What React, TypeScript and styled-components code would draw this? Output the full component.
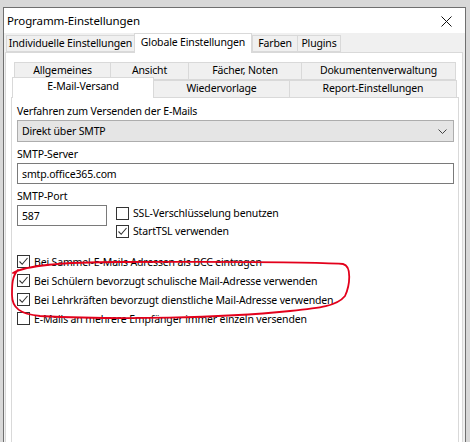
import styled, { createGlobalStyle } from "styled-components";

const GlobalStyle = createGlobalStyle`
    html, body {
        margin: 0;
        padding: 0;
        background: #d8d8d8;
    }
`;

interface TabDef {
    label: string;
    w: number;
    active?: boolean;
}

const outerTabs: TabDef[] = [
    { label: "Individuelle Einstellungen", w: 128 },
    { label: "Globale Einstellungen", w: 118, active: true },
    { label: "Farben", w: 45 },
    { label: "Plugins", w: 44 },
];

const innerBackRow: TabDef[] = [
    { label: "Allgemeines", w: 97 },
    { label: "Ansicht", w: 78 },
    { label: "Fächer, Noten", w: 113 },
    { label: "Dokumentenverwaltung", w: 154 },
];

const innerFrontRow: TabDef[] = [
    { label: "E-Mail-Versand", w: 142, active: true },
    { label: "Wiedervorlage", w: 136 },
    { label: "Report-Einstellungen", w: 167 },
];

const mailOptions = [
    { label: "Bei Sammel-E-Mails Adressen als BCC eintragen", checked: true },
    { label: "Bei Schülern bevorzugt schulische Mail-Adresse verwenden", checked: true },
    { label: "Bei Lehrkräften bevorzugt dienstliche Mail-Adresse verwenden", checked: true },
    { label: "E-Mails an mehrere Empfänger immer einzeln versenden", checked: false },
];

const CheckBox = ({ checked, label }: { checked: boolean; label: string }) => (
    <CheckRow>
        <Box>
            {checked && (
                <svg width="11" height="11" viewBox="0 0 11 11">
                    <path d="M1.5 5.5 L4.2 8.3 L9.5 2" fill="none" stroke="#333" strokeWidth="1.1" />
                </svg>
            )}
        </Box>
        <span>{label}</span>
    </CheckRow>
);

export default function App() {
    return (
        <Screen>
            <GlobalStyle />
            <Dialog>
                <TitleBar>
                    <span>Programm-Einstellungen</span>
                    <CloseButton>
                        <svg width="11" height="11" viewBox="0 0 11 11">
                            <path d="M0.5 0.5 L10.5 10.5 M10.5 0.5 L0.5 10.5" stroke="#111" strokeWidth="1" />
                        </svg>
                    </CloseButton>
                </TitleBar>
                <DialogBody>
                    <OuterTabStrip>
                        {outerTabs.map((t) => (
                            <OuterTab key={t.label} $w={t.w} $active={t.active}>
                                {t.label}
                            </OuterTab>
                        ))}
                    </OuterTabStrip>
                    <OuterPage>
                        <BackRow>
                            {innerBackRow.map((t) => (
                                <InnerTab key={t.label} $w={t.w}>
                                    {t.label}
                                </InnerTab>
                            ))}
                        </BackRow>
                        <FrontRow>
                            {innerFrontRow.map((t) => (
                                <InnerTab key={t.label} $w={t.w} $active={t.active}>
                                    {t.label}
                                </InnerTab>
                            ))}
                        </FrontRow>
                        <InnerPage>
                            <Label>Verfahren zum Versenden der E-Mails</Label>
                            <Select>
                                <span>Direkt über SMTP</span>
                                <svg width="9" height="5" viewBox="0 0 9 5">
                                    <path d="M0.5 0.5 L4.5 4.5 L8.5 0.5" fill="none" stroke="#444" strokeWidth="1" />
                                </svg>
                            </Select>
                            <Label>SMTP-Server</Label>
                            <TextField>smtp.office365.com</TextField>
                            <Label>SMTP-Port</Label>
                            <PortRow>
                                <TextField $w={90}>587</TextField>
                                <PortOptions>
                                    <CheckBox checked={false} label="SSL-Verschlüsselung benutzen" />
                                    <CheckBox checked label="StartTSL verwenden" />
                                </PortOptions>
                            </PortRow>
                            <OptionList>
                                {mailOptions.map((o) => (
                                    <CheckBox key={o.label} checked={o.checked} label={o.label} />
                                ))}
                            </OptionList>
                        </InnerPage>
                    </OuterPage>
                </DialogBody>
            </Dialog>
            <Markup width="470" height="442" viewBox="0 0 470 442">
                <path
                    d="M13 273 C25 266 60 262 120 262 C200 262 300 261 343 264 C352 266 350 285 345 296 C337 306 320 308 290 311 C220 318 120 320 40 316 C20 314 12 308 12 295 C12 285 12 276 18 270"
                    fill="none"
                    stroke="#e3001b"
                    strokeWidth="1.8"
                    strokeLinecap="round"
                />
            </Markup>
        </Screen>
    );
}

const Screen = styled.div`
    position: relative;
    width: 470px;
    height: 442px;
    overflow: hidden;
    padding: 7px 0 0 3px;
    box-sizing: border-box;
    font-family: "Noto Sans", "Open Sans", sans-serif;
    font-size: 10.5px;
    letter-spacing: -0.15px;
    color: #000;
`;

const Dialog = styled.div`
    width: 463px;
    height: 460px;
    box-sizing: border-box;
    border: 1px solid #6f6f6f;
    background: #f0f0f0;
    display: flex;
    flex-direction: column;
`;

const TitleBar = styled.div`
    height: 25px;
    flex: none;
    background: #fff;
    display: flex;
    align-items: center;
    justify-content: space-between;
    padding: 0 13px 0 3px;
    font-size: 11.5px;
    letter-spacing: -0.1px;
`;

const CloseButton = styled.div`
    display: flex;
    align-items: center;
    margin-top: 1px;
`;

const DialogBody = styled.div`
    flex: 1;
    padding: 0 2px 0 1px;
    display: flex;
    flex-direction: column;
`;

const OuterTabStrip = styled.div`
    display: flex;
    height: 19px;
    padding-left: 1px;
    position: relative;
    z-index: 1;
`;

const OuterTab = styled.div<{ $w: number; $active?: boolean }>`
    width: ${(p) => p.$w}px;
    box-sizing: border-box;
    text-align: center;
    white-space: nowrap;
    border: 1px solid #d9d9d9;
    border-right-width: ${(p) => (p.$active ? 1 : 0)}px;
    border-bottom: ${(p) => (p.$active ? "none" : "1px solid #d9d9d9")};
    background: ${(p) => (p.$active ? "#fff" : "#f0f0f0")};
    margin-top: ${(p) => (p.$active ? 0 : 2)}px;
    height: ${(p) => (p.$active ? 20 : 17)}px;
    line-height: ${(p) => (p.$active ? 17 : 15)}px;
    &:last-child {
        border-right-width: 1px;
    }
`;

const OuterPage = styled.div`
    flex: 1;
    background: #fff;
    border: 1px solid #d9d9d9;
    padding: 9px 3px 0 5px;
    display: flex;
    flex-direction: column;
`;

const BackRow = styled.div`
    display: flex;
    height: 18px;
    padding-left: 3px;
`;

const FrontRow = styled.div`
    display: flex;
    height: 17px;
    padding-left: 1px;
    position: relative;
    z-index: 1;
`;

const InnerTab = styled.div<{ $w: number; $active?: boolean }>`
    width: ${(p) => p.$w}px;
    flex: none;
    box-sizing: border-box;
    text-align: center;
    white-space: nowrap;
    border: 1px solid #d9d9d9;
    border-left-width: 0;
    border-bottom: ${(p) => (p.$active ? "none" : "1px solid #d9d9d9")};
    background: ${(p) => (p.$active ? "#fff" : "#f0f0f0")};
    margin-top: ${(p) => (p.$active ? -3 : 0)}px;
    height: ${(p) => (p.$active ? 21 : 18)}px;
    line-height: ${(p) => (p.$active ? 17 : 15)}px;
    &:first-child {
        border-left-width: 1px;
    }
`;

const InnerPage = styled.div`
    flex: 1;
    border: 1px solid #d9d9d9;
    padding: 5px 4px 0 5px;
    display: flex;
    flex-direction: column;
    align-items: flex-start;
`;

const Label = styled.div`
    line-height: 16px;
    margin-bottom: 1px;
    &:not(:first-child) {
        margin-top: 4px;
    }
`;

const Select = styled.div`
    align-self: stretch;
    height: 22px;
    box-sizing: border-box;
    background: #e5e5e5;
    border: 1px solid #adadad;
    display: flex;
    align-items: center;
    justify-content: space-between;
    padding: 0 6px 0 4px;
`;

const TextField = styled.div<{ $w?: number }>`
    align-self: ${(p) => (p.$w ? "auto" : "stretch")};
    width: ${(p) => (p.$w ? `${p.$w}px` : "auto")};
    height: 21px;
    box-sizing: border-box;
    background: #fff;
    border: 1px solid #7a7a7a;
    display: flex;
    align-items: center;
    padding: 0 4px;
    flex: none;
`;

const PortRow = styled.div`
    display: flex;
    gap: 9px;
    align-items: flex-start;
`;

const PortOptions = styled.div`
    display: flex;
    flex-direction: column;
    margin-top: -1px;
`;

const CheckRow = styled.div`
    display: flex;
    align-items: center;
    gap: 4px;
    height: 18px;
    white-space: nowrap;
`;

const Box = styled.span`
    width: 13px;
    height: 13px;
    box-sizing: border-box;
    border: 1px solid #333;
    background: #fff;
    display: flex;
    align-items: center;
    justify-content: center;
    flex: none;
`;

const OptionList = styled.div`
    display: flex;
    flex-direction: column;
    margin-top: 12px;
    & > div {
        height: 19px;
    }
`;

const Markup = styled.svg`
    position: absolute;
    left: 0;
    top: 0;
    pointer-events: none;
`;
